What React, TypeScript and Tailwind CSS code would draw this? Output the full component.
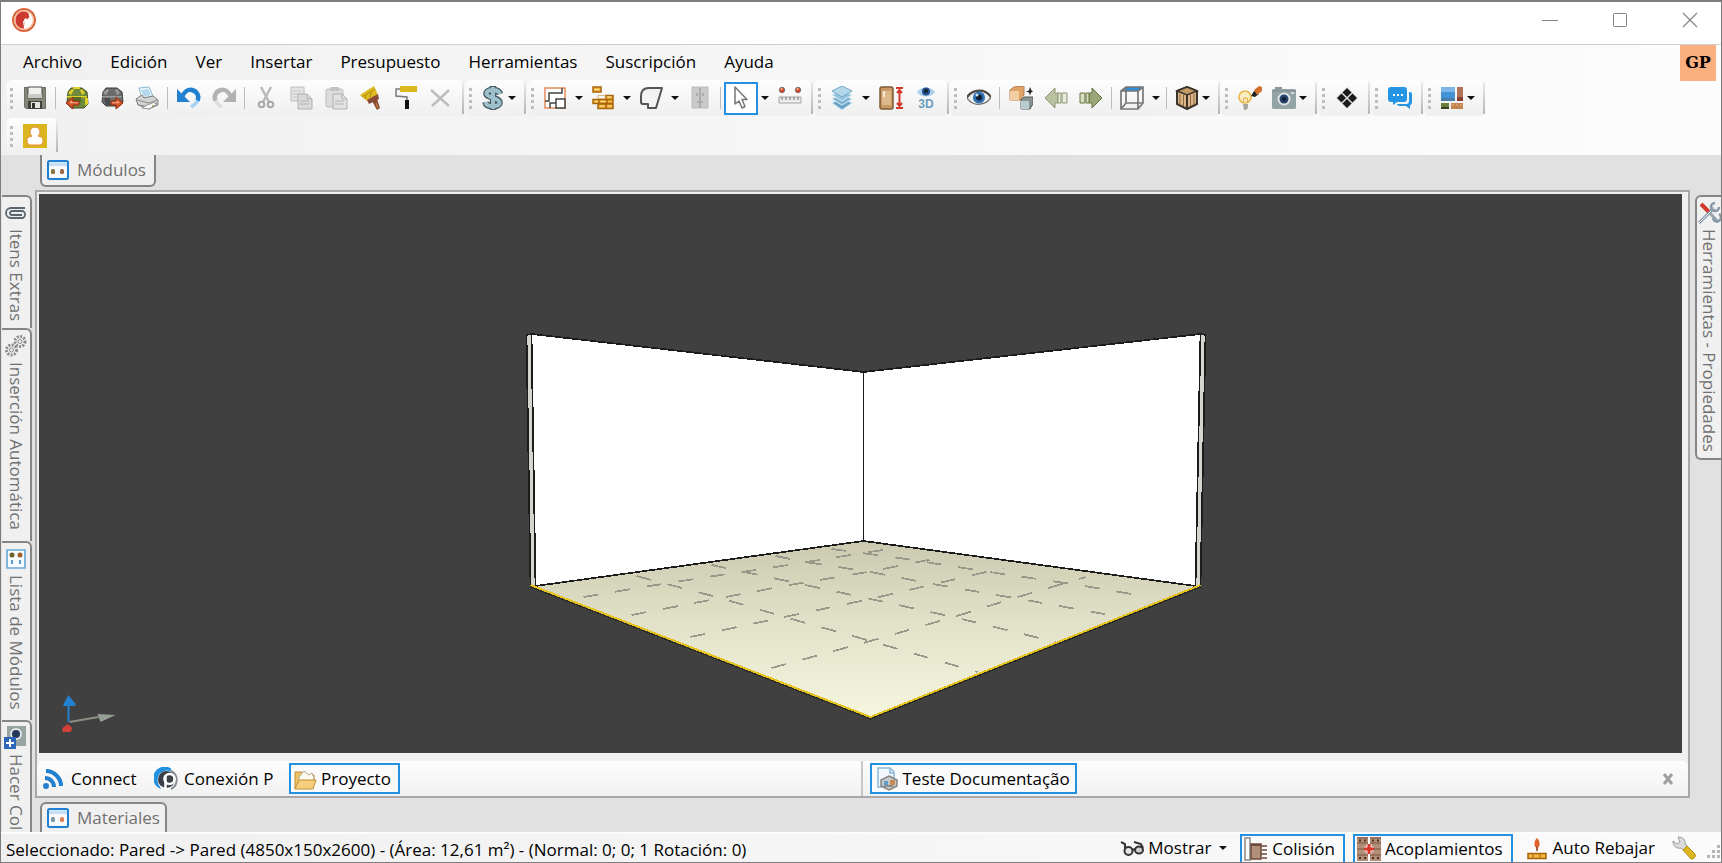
import type { ReactNode } from "react"

const menus = ["Archivo", "Edición", "Ver", "Insertar", "Presupuesto", "Herramientas", "Suscripción", "Ayuda"]

interface IconProps {
  children: ReactNode
}

function Icon({ children }: IconProps) {
  return (
    <svg viewBox="0 0 24 24" className="w-6 h-6 shrink-0" fill="none" aria-hidden="true">
      {children}
    </svg>
  )
}

function Caret() {
  return (
    <svg viewBox="0 0 8 4" className="w-2 h-1 shrink-0" aria-hidden="true">
      <path d="M0 0h8L4 4z" fill="#111" />
    </svg>
  )
}

function Grip() {
  return (
    <div className="w-[11px] flex flex-col items-center gap-[3px] shrink-0">
      {[0, 1, 2, 3].map((i) => (
        <span key={i} className="w-[3px] h-[3px] bg-[#bdbdbd]" />
      ))}
    </div>
  )
}

function Group({ children }: { children: ReactNode }) {
  return (
    <div className="flex items-center h-9 mr-px rounded-md bg-linear-to-b from-[#fdfdfd] to-[#efefef]">
      <Grip />
      {children}
      <span className="w-0.5 h-8 ml-1 bg-linear-to-b from-[#ececec] to-[#b4b4b4]" />
    </div>
  )
}

function Separator() {
  return <span className="w-px h-[22px] mx-[3px] bg-[#bdbdbd]" />
}

function ToolButton({ label, children }: { label: string; children: ReactNode }) {
  return (
    <button aria-label={label} className="w-[34px] h-8 ml-px flex items-center justify-center hover:bg-sky-100">
      <Icon>{children}</Icon>
    </button>
  )
}

// icon and caret are two separate targets
function SplitButton({ label, active, children }: { label: string; active?: boolean; children: ReactNode }) {
  return (
    <div className="flex">
      <button
        aria-label={label}
        className={
          active
            ? "w-[34px] h-[33px] flex items-center justify-center border-2 border-[#2191e0] bg-white"
            : "w-[34px] h-8 flex items-center justify-center hover:bg-sky-100"
        }
      >
        <Icon>{children}</Icon>
      </button>
      <button aria-label={`${label}: opciones`} className="w-[14px] flex items-center justify-center">
        <Caret />
      </button>
    </div>
  )
}

function DropButton({ label, children }: { label: string; children: ReactNode }) {
  return (
    <button aria-label={label} className="w-11 h-8 pl-[5px] flex items-center gap-[3px] hover:bg-sky-100">
      <Icon>{children}</Icon>
      <Caret />
    </button>
  )
}

function AppLogo() {
  return (
    <svg viewBox="0 0 24 24" className="w-6 h-6" aria-hidden="true">
      <circle cx="12" cy="12" r="11" fill="#fff" stroke="#d9643c" strokeWidth="2" />
      <circle cx="12" cy="12" r="9.4" fill="none" stroke="#f3b58f" strokeWidth="1.200" />
      <path d="M12 20.500C6 20.500 3.500 16 3.500 12S6.500 4 11 3.500c2-.3 4.500.5 5.500 2l.8 3.500-1.500 2-2.800-.8-1 2 .5 3.500z" fill="#cd3a2f" />
      <path d="M11.500 13l1 7" stroke="#fff" strokeWidth="1" />
    </svg>
  )
}

function ModuleGlyph({ left, right }: { left: string; right: string }) {
  return (
    <svg viewBox="0 0 22 20" className="w-[22px] h-5 shrink-0" aria-hidden="true">
      <rect x="1" y="1" width="20" height="18" rx="1.500" fill="#f3f7fa" stroke="#1f7fd4" strokeWidth="2" />
      <path d="M2 2.500h18v3.500H2z" fill="#c3def5" />
      <path d="M3 7h7v10H3zM12 7h7v10h-7z" fill="#fbfbfb" />
      <rect x="4" y="9" width="4" height="5" rx="1.500" fill={left} />
      <rect x="13" y="9" width="4" height="5" rx="1.500" fill={right} />
    </svg>
  )
}

function MainToolbar() {
  return (
    <div className="flex items-center pl-[5px]">
      <Group>
        <ToolButton label="Guardar">
          <path d="M1 1h22v22H3l-2-2z" fill="#6d7064" />
          <path d="M2 2h20v20H3.500L2 20.500z" fill="#85877b" />
          <path d="M5 1h14v11H5z" fill="#f0f0ee" stroke="#4a4c45" />
          <path d="M5 8h14v4H5z" fill="#c9cac5" />
          <path d="M5 15h14v8H5z" fill="#3f413b" />
          <path d="M8 16h9v6H8z" fill="#e3e3e0" />
          <path d="M9 17h3v5H9z" fill="#33352f" />
        </ToolButton>
        <Separator />
        <ToolButton label="Importar">
          <path d="M6 2h11l5 4 1 12-4 4H6l-4-5 1-11z" fill="#6d8a3c" stroke="#3d4b22" />
          <path d="M3 7l4-4 2 1-3 5zM20 7l-3-4-2 1 2 5zM8 1h7v2H8zM2 10h20v1.500H2zM20 12h3v6l-3 2z" fill="#e3cf2b" />
          <path d="M8 11h8v5H8z" fill="#526b2a" />
          <path d="M1 17l7-6v4h6v4H8v4z" fill="#d95328" stroke="#8c2d12" />
          <path d="M4 17l3-2.500v1.700h6v1H6z" fill="#f2b08d" />
        </ToolButton>
        <ToolButton label="Exportar">
          <path d="M6 2h11l5 4 1 10-4 4H6l-4-4 1-10z" fill="#6b6b6b" stroke="#3d3d3d" />
          <path d="M3 7l4-4 2 1-3 5zM20 7l-3-4-2 1 2 5zM2 10h20v1.500H2z" fill="#9a9a9a" />
          <path d="M4 12h6v7H6z" fill="#4b4b4b" />
          <path d="M23 17l-7-6v4h-5v4h5v4z" fill="#d95328" stroke="#8c2d12" />
          <path d="M20 17l-3-2.500v1.700h-5v1h6z" fill="#f2b08d" />
        </ToolButton>
        <ToolButton label="Imprimir">
          <path d="M4 2l10-1 4 9-11 3z" fill="#eaf4fb" stroke="#8db7d2" />
          <path d="M6 4l7-1 3 6-7 2z" fill="#b5d8ec" />
          <path d="M1 13l6-4 2 3 9-2 5 4v5l-9 4-11-4z" fill="#d3d3d3" stroke="#7e7e7e" />
          <path d="M2 14l12 3 8-3M4 19l10 2 8-4" stroke="#8a8a8a" />
          <path d="M12 19l8-3 1 3-7 4-7-1z" fill="#f5f5f5" stroke="#999" />
          <circle cx="18" cy="20" r="1" fill="#88a843" />
        </ToolButton>
        <Separator />
        <ToolButton label="Deshacer">
          <path d="M15 5c6 1 8 6 5.500 10-1.200 2.500-3 4-6.500 6" stroke="#a9d0f2" strokeWidth="3.500" />
          <path d="M5 11c2-5 6-8 10-7 5 1.200 7.500 6 5.500 10.500" stroke="#2180d0" strokeWidth="4.500" />
          <path d="M0 3v13h13z" fill="#2180d0" />
        </ToolButton>
        <ToolButton label="Rehacer">
          <path d="M9 5c-6 1-8 6-5.500 10 1.200 2.500 3 4 6.500 6" stroke="#dedede" strokeWidth="3.500" />
          <path d="M19 11c-2-5-6-8-10-7-5 1.200-7.500 6-5.500 10.500" stroke="#b3b3b3" strokeWidth="4.500" />
          <path d="M24 3v13H11z" fill="#b0b0b0" />
        </ToolButton>
        <Separator />
        <ToolButton label="Cortar">
          <path d="M7 1l8 15M17 1L9 16" stroke="#b9b9b9" strokeWidth="2.500" />
          <circle cx="7.500" cy="18.500" r="2.800" stroke="#a8a8a8" strokeWidth="2" />
          <circle cx="16.500" cy="18.500" r="2.800" stroke="#a8a8a8" strokeWidth="2" />
        </ToolButton>
        <ToolButton label="Copiar">
          <path d="M2 1h13v14H2z" fill="#e4e4e4" stroke="#bcbcbc" />
          <path d="M4 5h8M4 8h8M4 11h4" stroke="#c6c6c6" />
          <path d="M9 8h9l5 5v10H9z" fill="#dadada" stroke="#b0b0b0" />
          <path d="M18 8v5h5M11 15h9M11 18h9" stroke="#b4b4b4" />
        </ToolButton>
        <ToolButton label="Pegar">
          <rect x="2" y="3" width="17" height="18" rx="2" fill="#dcdcdc" stroke="#bcbcbc" />
          <rect x="6" y="1" width="9" height="4" rx="1" fill="#c2c2c2" />
          <path d="M9 8h9l5 5v10H9z" fill="#e2e2e2" stroke="#b0b0b0" />
          <path d="M18 8v5h5M11 15h9M11 18h9" stroke="#b4b4b4" />
        </ToolButton>
        <ToolButton label="Copiar formato">
          <path d="M1 9L15 0l4 9-11 6z" fill="#ddb91f" />
          <path d="M3 11l13-8M7 9l-1 4M12 6l-1 5" stroke="#b08f12" />
          <path d="M8 14l11-6 1 5-10 5z" fill="#8a4a3c" />
          <path d="M13 15l5-2 3 9-3 2z" fill="#8a4a2c" />
          <path d="M17 17l2 5" stroke="#c07a48" strokeWidth="1.500" />
        </ToolButton>
        <ToolButton label="Pintar">
          <path d="M6 0h17v6H6z" fill="#dcb81e" />
          <path d="M6 3H2v7l11 1v4" stroke="#7a7a7a" strokeWidth="1.500" />
          <path d="M11 14h4v9h-4z" fill="#111" />
        </ToolButton>
        <ToolButton label="Borrar">
          <path d="M2 4l18 16M20 4L3 20" stroke="#bdbdbd" strokeWidth="2.500" />
        </ToolButton>
      </Group>
      <Group>
        <DropButton label="Precios">
          <path d="M19 8c-1-3-4-4-7-4-4 0-6.500 1.500-6.500 3.800 0 3.700 13 4.200 13 8.700 0 2.500-3 3.700-6.500 3.700-4 0-7-1-7.500-4.200M12 0v24" stroke="#455a60" strokeWidth="6.500" />
          <path d="M19 8c-1-3-4-4-7-4-4 0-6.500 1.500-6.500 3.800 0 3.700 13 4.200 13 8.700 0 2.500-3 3.700-6.500 3.700-4 0-7-1-7.500-4.200M12 1v22" stroke="#9dc0cc" strokeWidth="4" />
        </DropButton>
      </Group>
      <Group>
        <SplitButton label="Planta">
          <path d="M2 2h20v20H2z" fill="#fff" stroke="#e58a5b" strokeWidth="1.500" />
          <path d="M2 15h4V7h13V2M7 22v-5h6" stroke="#444" strokeWidth="1.500" />
          <path d="M13 13h9v9h-9z" fill="#fff" stroke="#444" strokeWidth="1.500" />
        </SplitButton>
        <SplitButton label="Pared">
          <path d="M2 1h8v5H2zM15 9.500h7v4h-7zM2 13.500h6v4H2zM8 13.500h8v4H8zM16 13.500h6v4h-6zM7 18h8v4.500H7zM15 18h7v4.500h-7z" fill="#f4b63d" stroke="#a8650d" strokeWidth="1.500" />
          <path d="M7 9.500h7v3H7z" stroke="#d9b878" />
          <path d="M4 3.500h4M16 11h4M4 15.500h3M10 15.500h4M9 20h4M17 20h3" stroke="#fbe2a0" />
        </SplitButton>
        <SplitButton label="Piso">
          <path d="M2 10c0-5 3-8 8-8h13l-6 20H9v-4H4c-1 0-2-1-2-2z" fill="#f3f3f3" stroke="#555" strokeWidth="2" strokeLinejoin="round" />
        </SplitButton>
        <ToolButton label="Armario">
          <path d="M4 1h16v21H4z" fill="#cacaca" stroke="#bcbcbc" />
          <path d="M12 2v20M9 7v3M15 7v3M9 16h6" stroke="#a3a3a3" strokeWidth="1.500" />
        </ToolButton>
        <Separator />
        <SplitButton label="Seleccionar" active>
          <path d="M6 1v17l4-3 3 7 3-1.500-3-7h5z" fill="#fff" stroke="#777" strokeWidth="1.500" strokeLinejoin="round" />
        </SplitButton>
        <ToolButton label="Medir">
          <circle cx="4" cy="4" r="2.700" fill="#d9482b" stroke="#666" strokeWidth=".8" />
          <circle cx="20" cy="4" r="2.700" fill="#d9482b" stroke="#666" strokeWidth=".8" />
          <circle cx="3.500" cy="3" r="1" fill="#f6c0a0" />
          <circle cx="19.500" cy="3" r="1" fill="#f6c0a0" />
          <path d="M1 11h22v6H1z" fill="#ececec" stroke="#a6a6a6" />
          <path d="M4 11v3M8 11v3M12 11v3M16 11v3M20 11v3" stroke="#666" />
        </ToolButton>
      </Group>
      <Group>
        <SplitButton label="Capas">
          <path d="M2 17l10-5 10 5-10 7z" fill="#6aa5c8" stroke="#d6ebf5" />
          <path d="M2 13l10-5 10 5-10 6z" fill="#7fb5d3" stroke="#d6ebf5" />
          <path d="M2 9l10-5 10 5-10 6z" fill="#94c4de" stroke="#d6ebf5" />
          <path d="M2 5l10-5 10 5-10 6z" fill="#b3d8ea" stroke="#6fa6c4" />
        </SplitButton>
        <ToolButton label="Altura de puerta">
          <rect x="1" y="1" width="13" height="22" rx="2" fill="#c99a63" stroke="#7c5a34" strokeWidth="1.500" />
          <path d="M3 5h9v14H3z" fill="#dcb98b" />
          <path d="M4 5h2v6H4z" fill="#f7ead6" />
          <path d="M17 2h7M17 22h7M20.500 4v16M18 7l2.500-3 2.500 3M18 17l2.500 3 2.500-3" stroke="#d2392c" strokeWidth="2" />
        </ToolButton>
        <ToolButton label="Vista 3D">
          <path d="M3 6c4-6 14-6 18 0-4 6-14 6-18 0z" fill="#a8d0e8" />
          <circle cx="12" cy="5.500" r="4" fill="#28508f" />
          <circle cx="12" cy="5" r="2" fill="#12202f" />
          <text x="12" y="22" textAnchor="middle" fontSize="12" fontWeight="700" fontFamily="Liberation Sans, sans-serif" fill="#6b9dbd">3D</text>
        </ToolButton>
      </Group>
      <Group>
        <ToolButton label="Visualizar">
          <path d="M0 12C5 3 18 2 24 11c-5 9-18 10-24 1z" fill="#eef0f2" stroke="#6b625e" strokeWidth="1.200" />
          <path d="M0 11C6 3 18 2 24 11" stroke="#4e4642" strokeWidth="2.200" />
          <circle cx="12" cy="11.500" r="6" fill="#2f6fb0" />
          <circle cx="12" cy="11.500" r="3" fill="#101c30" />
          <circle cx="10" cy="9" r="1.500" fill="#cfe3f5" />
        </ToolButton>
        <Separator />
        <ToolButton label="Duplicar módulo">
          <path d="M1 4l4-3 10-1v9l-4 5H1z" fill="#e0a468" stroke="#b87d49" />
          <path d="M1 5h9v9H1z" fill="#f2cfa3" />
          <path d="M12 14l3-3h9v7l-3 5h-9z" fill="#8a9391" stroke="#57605f" />
          <path d="M12 15h8v8h-8z" fill="#b9cdd0" />
          <path d="M21 1l1.500 3.500L24 5.500l-2 1-1 3-1-3-3-1 3-1z" fill="#222" />
        </ToolButton>
        <ToolButton label="Anterior">
          <path d="M1 12L11 2v5h3v10h-3v5z" fill="#b9c1a1" stroke="#8d9776" />
          <path d="M14 7h3v10h-3zM18 7h5v10h-5z" fill="#e6ead8" stroke="#8d9776" />
        </ToolButton>
        <ToolButton label="Siguiente">
          <path d="M23 12L13 2v5h-3v10h3v5z" fill="#9aa67a" stroke="#66743f" />
          <path d="M7 7h3v10H7zM1 7h5v10H1z" fill="#d7dcc4" stroke="#66743f" />
        </ToolButton>
        <Separator />
        <SplitButton label="Perspectiva">
          <path d="M6 1h17l-5 4H1z" fill="#2f8fdc" />
          <path d="M1 5l5-4h17v16l-5 6H1zM1 5h17v18M18 5l5-4M6 2v15h17M6 17l-5 6" stroke="#777" strokeWidth="1.700" />
        </SplitButton>
        <Separator />
        <DropButton label="Texturas">
          <path d="M12 1l10 4v13l-10 5-10-5V5z" fill="#dcb688" stroke="#3a332a" strokeWidth="2" strokeLinejoin="round" />
          <path d="M2 5l10 4 10-4-10-4z" fill="#c39a68" stroke="#3a332a" strokeWidth="1.500" />
          <path d="M12 9v14" stroke="#3a332a" strokeWidth="2" />
          <path d="M5 8v11M8.500 9v11M15.500 9v11M19 8v11" stroke="#8b683e" />
        </DropButton>
      </Group>
      <Group>
        <ToolButton label="Iluminación">
          <circle cx="7" cy="11" r="6" fill="#fbeec2" stroke="#e8b84b" strokeWidth="1.700" />
          <path d="M5 17l1-5h3l1 5" stroke="#e0a63a" />
          <path d="M5 18h5v4l-2 2H6z" fill="#a7a7a0" />
          <path d="M13 10l3-5 5 3-4 3z" fill="#222" />
          <path d="M16 4l5-4 3 1v4l-5 4z" fill="#d1702c" />
        </ToolButton>
        <DropButton label="Render">
          <path d="M3 1h7v3H3z" fill="#8a9696" />
          <rect x="0" y="3" width="24" height="20" rx="1.500" fill="#94a3a6" />
          <path d="M0 5h24" stroke="#7b898c" />
          <circle cx="12" cy="13" r="6.500" fill="#dfe4e6" />
          <circle cx="12" cy="13" r="4.500" fill="#27426b" />
          <circle cx="12" cy="13" r="2" fill="#0f1c31" />
          <path d="M19 6h3v2h-3z" fill="#d4dadc" />
        </DropButton>
      </Group>
      <Group>
        <ToolButton label="Mover">
          <path d="M12 1.500l5 5-5 5-5-5zM12 12.500l5 5-5 5-5-5zM6.500 7l5 5-5 5-5-5zM17.500 7l5 5-5 5-5-5z" fill="#1b1b1b" stroke="#f3f3f3" strokeWidth=".8" />
        </ToolButton>
      </Group>
      <Group>
        <ToolButton label="Mensajes">
          <path d="M21 6c3 0 3 1 3 3v7c0 2-1 3-2 3v4l-4-3h-6c-2 0-3-1-3-2h9c2 0 3-1 3-3z" fill="#2495e2" />
          <path d="M3 1h13c2 0 3 1 3 3v9c0 2-1 3-3 3H9l-4 3v-3H3c-2 0-3-1-3-3V4c0-2 1-3 3-3z" fill="#2495e2" />
          <path d="M5 8h2v2H5zM9 8h2v2H9zM13 8h2v2h-2z" fill="#fff" />
        </ToolButton>
      </Group>
      <Group>
        <DropButton label="Paneles">
          <path d="M1 1h14v14H1z" fill="#4193d6" />
          <path d="M1 1h14v5H1z" fill="#7fb6e6" />
          <path d="M1 12h14v3H1z" fill="#4a7fa8" />
          <path d="M17 1h6v14h-6z" fill="#b0725a" />
          <path d="M17 11h6v4h-6z" fill="#8a3f2e" />
          <path d="M1 17h8v6H1z" fill="#6b7f3a" />
          <path d="M1 21h8v2H1z" fill="#38441f" />
          <path d="M11 17h12v6H11z" fill="#c4834f" />
          <path d="M12 19h10" stroke="#e5b488" strokeDasharray="2 2" />
        </DropButton>
      </Group>
    </div>
  )
}

interface SideTabProps {
  label: string
  className: string
  icon: ReactNode
}

function SideTab({ label, className, icon }: SideTabProps) {
  return (
    <button
      className={`flex flex-col items-center pt-1 gap-1 overflow-hidden bg-[#f0f0f0] border-[#858585] text-[#707070] ${className}`}
    >
      <Icon>{icon}</Icon>
      <span className="[writing-mode:vertical-rl] whitespace-nowrap leading-6">{label}</span>
    </button>
  )
}

function LeftTabs() {
  return (
    <div className="w-[31px] pl-px pt-10 flex flex-col shrink-0 overflow-hidden">
      <SideTab
        label="Itens Extras"
        className="h-[133px] shrink-0 border-t-2 border-r-2 rounded-tr-md"
        icon={
          <path d="M21 7H7a5 5 0 0 0 0 10h12a4 4 0 0 0 0-7H8a2 2 0 0 0 0 4h10" stroke="#5c6670" strokeWidth="1.800" />
        }
      />
      <SideTab
        label="Inserción Automática"
        className="h-[213px] shrink-0 border-t-2 border-r-2 rounded-tr-md"
        icon={
          <g stroke="#8a8a8a">
            <circle cx="16" cy="7.500" r="5" strokeWidth="3" strokeDasharray="2 1.300" />
            <circle cx="16" cy="7.500" r="2" />
            <circle cx="7.500" cy="16" r="5" strokeWidth="3" strokeDasharray="2 1.300" />
            <circle cx="7.500" cy="16" r="2" />
          </g>
        }
      />
      <SideTab
        label="Lista de Módulos"
        className="h-[179px] shrink-0 border-t-2 border-r-2 rounded-tr-md"
        icon={
          <>
            <path d="M3 3h18v18H3z" fill="#f5fafd" stroke="#6ea9d6" strokeWidth="1.700" />
            <circle cx="8" cy="8" r="2.500" fill="#6d6132" />
            <circle cx="16" cy="8" r="2.500" fill="#a0602c" />
            <path d="M8 13v4M16 13v4" stroke="#5b9bd0" strokeWidth="2" />
          </>
        }
      />
      <SideTab
        label="Hacer Col"
        className="flex-1 min-h-0 border-t-2 border-r-2 rounded-tr-md"
        icon={
          <>
            <path d="M3 0h19v20H3z" fill="#98a3a3" />
            <circle cx="12" cy="8" r="6" fill="#dfe3e4" />
            <circle cx="12" cy="8" r="4" fill="#26385c" />
            <path d="M0 11h12v12H0z" fill="#2c66b8" />
            <path d="M2 17h8M6 13v8" stroke="#fff" strokeWidth="2" />
          </>
        }
      />
    </div>
  )
}

// floor joints, dashed in screen space
const joints = [
  "M583 597L649 586L720 575L769 568L831 558L895 548",
  "M631 615L720 598L789 585L867 572L943 557",
  "M690 637L784 617L870 599L934 584L1003 568",
  "M771 668L870 641L953 617L1014 598L1085 577",
  "M831 549L899 558L989 572L1078 585L1143 596",
  "M775 556L805 562L870 572L932 584L1014 598L1115 616",
  "M711 565L805 585L870 599L953 617L1055 642",
  "M636 576L670 585L720 598L784 617L870 641L977 672",
]

function Viewport() {
  return (
    <div className="flex-1 min-h-0 bg-[#404040]">
      <svg viewBox="39 194 1642 559" className="w-full h-full" fill="none" role="img" aria-label="Vista 3D del ambiente">
        <defs>
          <linearGradient id="floor" x1="0" y1="0" x2="0" y2="1">
            <stop offset="0" stopColor="#cbcab0" />
            <stop offset=".45" stopColor="#e1e1c8" />
            <stop offset="1" stopColor="#f6f6df" />
          </linearGradient>
        </defs>
        <path d="M526 335L531 334L535 586L530 585zM1205 335L1200 334L1195 586L1200 585z" fill="#d6d4cf" />
        <path d="M531 334L863 372L1200 334L1195 586L863 541L535 586z" fill="#fff" />
        <path d="M533 586L863 541L1198 586L870 717z" fill="url(#floor)" />
        <g stroke="#1c1c1c" strokeWidth="1.700" shapeRendering="crispEdges">
          <path d="M526 335L531 334L863 372L1200 334L1205 335L1200 585M526 335L530 585M531 334L535 586M1200 334L1195 586M863 372V541M535 586L863 541L1195 586" />
        </g>
        <g stroke="#98978a" strokeWidth="1.800" strokeDasharray="15 17" shapeRendering="crispEdges">
          {joints.map((d) => (
            <path key={d} d={d} />
          ))}
        </g>
        <path d="M530 587L870 719L1200 587" stroke="#2a2a1c" shapeRendering="crispEdges" />
        <path d="M530 585L870 717L1200 585" stroke="#e6c31c" strokeWidth="2" shapeRendering="crispEdges" />
        <path d="M68 722V705" stroke="#2180d0" strokeWidth="2" />
        <path d="M68 695L63 704V706H75V704z" fill="#2180d0" />
        <path d="M69 722L98 717" stroke="#8b9184" strokeWidth="2" />
        <path d="M97 714L115 715L100 722z" fill="#95a094" />
        <path d="M62 728L67 724L72 728L70 732H62z" fill="#cf4135" />
      </svg>
    </div>
  )
}

function DocumentBar() {
  return (
    <div className="h-[35px] shrink-0 flex items-center rounded-t-md bg-linear-to-b from-[#fdfdfd] to-[#f1f1f1] text-black">
      <div className="w-1/2 h-full pl-1 flex items-center border-r-2 border-[#c8c8c8]">
        <button className="w-[113px] flex items-center gap-[6px]">
          <Icon>
            <circle cx="5" cy="19" r="3" fill="#2180d0" />
            <path d="M4 11c5 0 9 4 9 9M5 4c8 0 15 7 15 15" stroke="#2180d0" strokeWidth="4" />
          </Icon>
          Connect
        </button>
        <button className="w-[135px] flex items-center gap-[6px]">
          <Icon>
            <path d="M17 1.500A11.500 11.500 0 1 0 7 22c-4-7-2-15 10-16z" fill="#2191e0" />
            <circle cx="13" cy="13" r="9.500" fill="#fff" />
            <path d="M17 4a10 10 0 0 1 0 18" stroke="#858a92" strokeWidth="2" />
            <circle cx="12.500" cy="12.500" r="8.500" fill="#3a3f48" />
            <circle cx="15.500" cy="12" r="5" stroke="#fff" strokeWidth="2.500" />
            <path d="M11.500 8v14" stroke="#fff" strokeWidth="2.500" />
          </Icon>
          Conexión P
        </button>
        <button className="h-[31px] pl-0.5 pr-[7px] flex items-center gap-1 border-2 border-[#2191e0] bg-[#fafafa]">
          <Icon>
            <path d="M2 22V5h7l2 3h10v6" fill="#edc165" stroke="#c08d34" />
            <path d="M6 10l5-6 5 4 3-2 2 5-2 6H6z" fill="#fdfaf0" stroke="#b5a88a" />
            <path d="M2 22l4-9h17l-3 9z" fill="#f5cf7d" stroke="#c08d34" />
          </Icon>
          Proyecto
        </button>
      </div>
      <button className="h-[31px] ml-[7px] px-[3px] pr-[5px] flex items-center gap-1 border-2 border-[#2191e0] bg-[#fafafa]">
        <Icon>
          <path d="M3 1h12l4 4v15H3z" fill="#f2f8fc" stroke="#8ab8d8" strokeWidth="1.500" />
          <path d="M15 1v5h4" stroke="#8ab8d8" strokeWidth="1.500" />
          <path d="M14 9l8 4v6l-8 4-8-4v-6z" fill="#c9c9c9" stroke="#858585" strokeWidth="1.500" />
          <path d="M9 14h4v4H9z" fill="#5e9cca" />
          <path d="M15 13h5v5h-5z" fill="#c98a54" />
          <path d="M9 19h9" stroke="#777" strokeWidth="1.500" />
        </Icon>
        Teste Documentação
      </button>
      <button aria-label="Cerrar documento" className="ml-auto mr-[14px] w-3 h-3">
        <svg viewBox="0 0 12 12" className="w-3 h-3" aria-hidden="true">
          <path d="M2 1l8 10M10 1L2 11" stroke="#a0a0a0" strokeWidth="3" />
        </svg>
      </button>
    </div>
  )
}

function StatusBar() {
  return (
    <footer className="h-[30px] shrink-0 flex items-center border-t-2 border-[#fcfcfc] bg-linear-to-r from-[#f0f0f0] to-[#fbfbfb] text-black">
      <span className="pl-[5px] pt-1 whitespace-nowrap">
        Seleccionado: Pared -&gt; Pared (4850x150x2600) - (Área: 12,61 m²) - (Normal: 0; 0; 1 Rotación: 0)
      </span>
      <div className="ml-auto flex items-center h-full">
        <button className="w-[116px] flex items-center gap-1">
          <Icon>
            <path d="M1 6l4 2v8" stroke="#333" strokeWidth="2" />
            <circle cx="8.500" cy="15" r="4" fill="#e6e6e6" stroke="#333" strokeWidth="2" />
            <ellipse cx="19" cy="14" rx="4" ry="3.500" fill="#d2d2d2" stroke="#333" strokeWidth="2" />
            <path d="M12 14l3-1M14 6l7 2 2 4" stroke="#333" strokeWidth="2" />
          </Icon>
          Mostrar
          <span className="pl-1">
            <Caret />
          </span>
        </button>
        <button className="h-7 ml-1 px-0.5 pr-2 flex items-center gap-1 border-2 border-b-0 border-[#2191e0] bg-[#fafafa]">
          <Icon>
            <path d="M1 1h5v22H1z" fill="#fafafa" stroke="#888" strokeWidth="1.500" />
            <path d="M7 7h10v15H7z" fill="#b18f7a" stroke="#6d4b3b" strokeWidth="1.500" />
            <path d="M7 8h10" stroke="#6d4b3b" strokeWidth="2" />
            <path d="M17 9h6M18 13h5M17 17h6M18 21h5" stroke="#6d4b3b" strokeWidth="1.500" />
          </Icon>
          Colisión
        </button>
        <button className="h-7 mx-2 px-0.5 pr-2 flex items-center gap-1 border-2 border-b-0 border-[#2191e0] bg-[#fafafa]">
          <Icon>
            <path d="M0 0h11v24H0zM13 0h11v24H13z" fill="#b08e78" />
            <path d="M0 6h24M0 12h24M0 18h24M0 1h24" stroke="#7a5342" />
            <path d="M2 3.500h2M7 3.500h2M15 3.500h2M20 3.500h2M2 21h2M7 21h2M15 21h2M20 21h2" stroke="#4b2c20" strokeWidth="2" />
            <path d="M11 0h2v24h-2z" fill="#fafafa" />
            <path d="M7 12h10M12 7v10" stroke="#f8e4e0" strokeWidth="5" />
            <path d="M7 12h10M12 7v10" stroke="#d8362a" strokeWidth="3" />
          </Icon>
          Acoplamientos
        </button>
        <button className="ml-1 pr-3 flex items-center gap-1">
          <Icon>
            <path d="M12 2c2 2 2.500 4 2.500 6s-.5 3.500-2.500 3.500S9.500 10 9.500 8s.5-4 2.500-6z" fill="#e0602a" />
            <path d="M12 11v4" stroke="#8c2d12" strokeWidth="1.500" />
            <path d="M3 17.500h18v5H3z" fill="#f4b63d" stroke="#a8650d" strokeWidth="1.500" />
            <path d="M8 18v5M15 18v5" stroke="#a8650d" />
          </Icon>
          Auto Rebajar
        </button>
        <button aria-label="Configuración" className="w-[34px] flex items-center justify-center">
          <Icon>
            <path d="M6 1l2 5-3 2-4-3c0 5 3 8 8 7l3 3 4-4-3-3c1-4-2-7-7-7z" fill="#dcdcdc" stroke="#9a9a9a" />
            <path d="M11 14l4-4 8 8c1 3-1 5-4 5z" fill="#ddb51d" stroke="#b08f12" />
          </Icon>
        </button>
        <svg viewBox="0 0 16 16" className="w-4 h-4 mt-2 ml-1" aria-hidden="true">
          <path d="M12 1h3v3h-3zM7 6h3v3H7zM12 6h3v3h-3zM2 11h3v3H2zM7 11h3v3H7zM12 11h3v3h-3z" fill="#b5b5b5" />
        </svg>
      </div>
    </footer>
  )
}

export default function App() {
  return (
    <div className="h-screen flex flex-col overflow-hidden border border-t-2 border-[#7d7d7d] bg-[#e1e1e1] font-['Open_Sans','Noto_Sans',sans-serif] text-[17px] leading-6">
      <header className="h-[42px] shrink-0 flex items-center bg-white">
        <div className="pl-[11px] pb-[6px]">
          <AppLogo />
        </div>
        <div className="ml-auto flex gap-2 pb-[6px] text-[#858585]">
          <button aria-label="Minimizar" className="w-[62px] h-8 flex items-center justify-center">
            <svg viewBox="0 0 16 16" className="w-4 h-4" aria-hidden="true">
              <path d="M0 8.500h16" stroke="currentColor" />
            </svg>
          </button>
          <button aria-label="Maximizar" className="w-[62px] h-8 flex items-center justify-center">
            <svg viewBox="0 0 16 16" className="w-4 h-4" fill="none" aria-hidden="true">
              <rect x="1.500" y="1.500" width="13" height="13" rx="1" stroke="currentColor" />
            </svg>
          </button>
          <button aria-label="Cerrar" className="w-[62px] h-8 flex items-center justify-center">
            <svg viewBox="0 0 16 16" className="w-4 h-4" aria-hidden="true">
              <path d="M1 1l14 14M15 1L1 15" stroke="currentColor" strokeWidth="1.200" />
            </svg>
          </button>
        </div>
      </header>

      <div className="h-[111px] shrink-0 flex justify-between border-t border-[#cfcfcf] bg-linear-to-r from-[#f0f0f0] via-[#f7f7f7] to-[#fcfcfc]">
        <div>
          <nav className="h-[35px] flex items-center pl-2 pb-[2px] text-black">
            {menus.map((m) => (
              <button key={m} className="px-[14px] hover:bg-sky-100">
                {m}
              </button>
            ))}
          </nav>
          <MainToolbar />
          <div className="flex pl-[5px] pt-[2px]">
            <Group>
              <ToolButton label="Cliente">
                <path d="M0 0h24v24H0z" fill="#dbb51e" />
                <path d="M4 17c0-4 3-5 8-5s8 1 8 5c0 3-2 4-4 4H8c-2 0-4-1-4-4z" fill="#fff" stroke="#e68d3c" />
                <circle cx="12" cy="8" r="5" fill="#fff" stroke="#e68d3c" />
                <path d="M9 11.500h6v3H9z" fill="#fff" />
              </ToolButton>
            </Group>
          </div>
        </div>
        <button className="w-9 h-9 mr-[5px] bg-[#fbaf7e] text-black font-['DejaVu_Serif',serif] font-bold text-base">GP</button>
      </div>

      <main className="flex-1 min-h-0 flex">
        <LeftTabs />
        <div className="flex-1 min-w-0 flex flex-col pl-[3px]">
          <div className="h-[35px] shrink-0">
            <button className="h-8 ml-[5px] pl-[5px] pr-2 flex items-center gap-2 border-2 border-t-0 rounded-b-md border-[#858585] bg-[#f0f0f0] text-[#707070]">
              <ModuleGlyph left="#8a7248" right="#9a6a4c" />
              Módulos
            </button>
          </div>
          <div className="flex-1 min-h-0 flex flex-col border-2 border-[#a8a8a8] bg-[#f0f0f0]">
            <div className="flex-1 min-h-0 flex flex-col pt-0.5 pl-0.5 pr-[6px] pb-2">
              <Viewport />
            </div>
            <DocumentBar />
          </div>
          <div className="h-[34px] pt-1 shrink-0">
            <button className="h-[30px] ml-[5px] pl-[5px] pr-[5px] flex items-center gap-2 border-2 border-b-0 rounded-t-md border-[#858585] bg-[#f0f0f0] text-[#707070]">
              <ModuleGlyph left="#7d98a8" right="#d9805a" />
              Materiales
            </button>
          </div>
        </div>
        <div className="w-[31px] pl-[5px] pt-10 shrink-0">
          <SideTab
            label="Herramientas - Propiedades"
            className="h-[265px] w-full border-2 border-r-0 rounded-l-md"
            icon={
              <>
                <path d="M4 3l9 9" stroke="#d2392c" strokeWidth="4" />
                <path d="M13 12l8 9" stroke="#9aa4ab" strokeWidth="3" />
                <path d="M2 22L17 7" stroke="#8799a8" strokeWidth="3" />
                <path d="M2 22L17 7" stroke="#e8eef2" />
                <path d="M22 6a4 4 0 1 1-4-4M16 17a4 4 0 1 0 6-4" stroke="#8799a8" strokeWidth="2.500" />
              </>
            }
          />
        </div>
      </main>

      <StatusBar />
    </div>
  )
}
